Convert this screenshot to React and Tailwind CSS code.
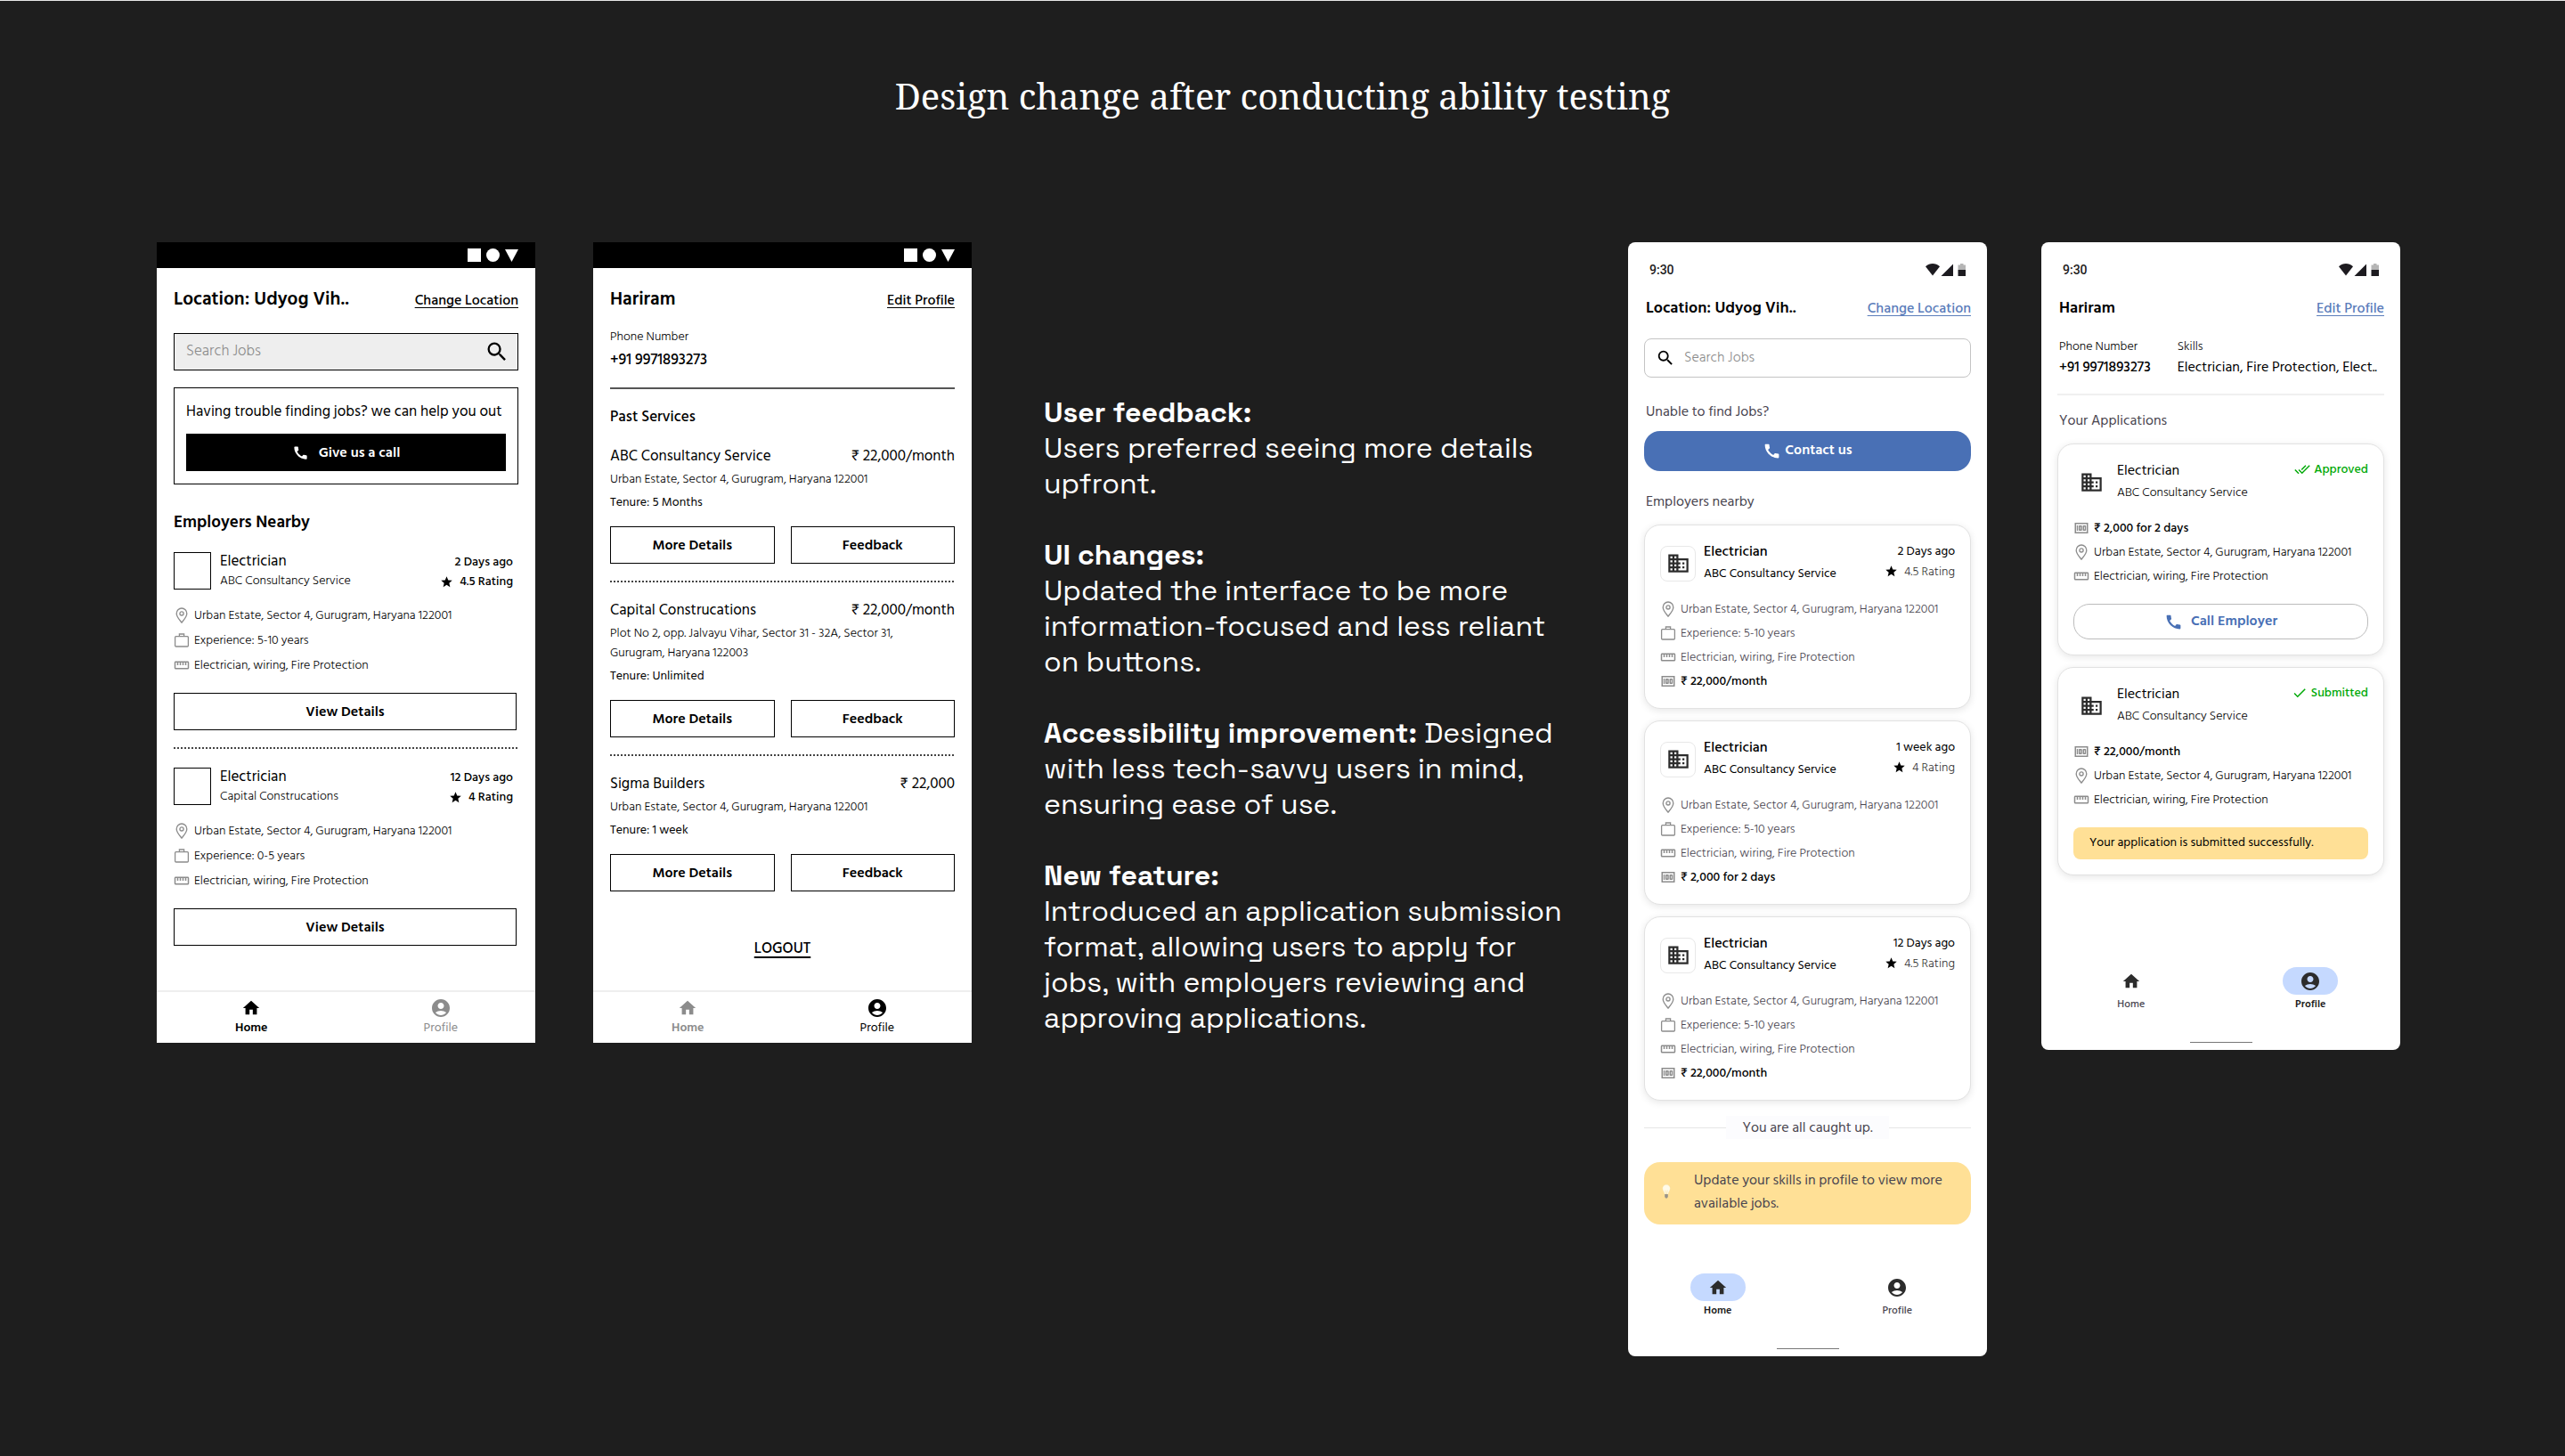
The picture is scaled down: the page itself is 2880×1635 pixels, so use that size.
import React from "react";
import {
  MdHome,
  MdAccountCircle,
  MdSearch,
  MdCall,
  MdStar,
  MdBusiness,
  MdStraighten,
  MdMoney,
  MdDone,
  MdDoneAll,
} from "react-icons/md";

const ADDRESS = "Urban Estate, Sector 4, Gurugram, Haryana 122001";
const SKILLS = "Electrician, wiring, Fire Protection";

function PinIcon() {
  return (
    <svg viewBox="0 0 18 18" className="size-[18px]" fill="none" stroke="currentColor" strokeWidth="1.3" aria-hidden="true">
      <path d="M9 17.2C6.6 14 3.2 10.4 3.2 6.9a5.8 5.9 0 0 1 11.6 0C14.8 10.4 11.4 14 9 17.2Z" />
      <circle cx="9" cy="6.9" r="2.1" />
    </svg>
  );
}

function BriefcaseIcon() {
  return (
    <svg viewBox="0 0 18 18" className="size-[18px]" fill="none" stroke="currentColor" strokeWidth="1.3" aria-hidden="true">
      <rect x="1.6" y="4.7" width="14.8" height="11.3" rx="1" />
      <path d="M6.4 4.5V2h5.2v2.5" />
    </svg>
  );
}

function BulbIcon() {
  return (
    <svg viewBox="0 0 10 16" className="h-4 w-[10px] shrink-0" aria-hidden="true">
      <path d="M5 .3A4.3 4.3 0 0 0 .7 4.6C.7 7 2.600 8.200 3 11h4c.4-2.800 2.300-4 2.300-6.400A4.300 4.300 0 0 0 5 .3Z" fill="#fffbe9" stroke="#f1dfa8" strokeWidth=".3" />
      <path d="M3.8 6.5 4.4 10.8h1.2l.6-4.3" fill="none" stroke="#f2d98c" strokeWidth=".5" />
      <path d="M3.2 11h3.600v3L5.800 15.500H4.200L3.200 14Z" fill="#98948a" />
    </svg>
  );
}

const META_ICONS = {
  place: <PinIcon />,
  experience: <BriefcaseIcon />,
  skills: <MdStraighten className="size-[18px]" />,
  pay: <MdMoney className="size-[18px]" />,
};

function Meta({ icon, className = "", children }) {
  return (
    <li className="flex items-center gap-[5px]">
      <span className="text-[#8c8c8c]">{META_ICONS[icon]}</span>
      <span className={className}>{children}</span>
    </li>
  );
}

/* ---------- First version: wireframes ---------- */

function WireShell({ title, action, active, children }) {
  return (
    <section className="flex flex-col bg-white text-black">
      <div className="flex h-[29px] items-center justify-end gap-1.5 bg-black pr-[19px]">
        <span className="size-[15px] bg-white" />
        <span className="size-[15px] rounded-full bg-white" />
        <svg viewBox="0 0 15 14" className="h-[14px] w-[15px]" aria-hidden="true">
          <path d="M0 0h15L7.5 14Z" fill="#fff" />
        </svg>
      </div>
      <div className="grow px-[19px] pt-[19px] pb-[35px]">
        <header className="flex items-baseline justify-between">
          <h2 className="text-[21px] leading-8 font-semibold">{title}</h2>
          <a href="#" className="text-[16px] leading-6 font-medium underline decoration-1 underline-offset-3">{action}</a>
        </header>
        {children}
      </div>
      <nav className="grid grid-cols-2 border-t-2 border-[#eeeeee] pt-1.5 pb-[7px]">
        <WireTab on={active === "home"} icon={<MdHome className="size-[22px]" />} className="font-semibold">Home</WireTab>
        <WireTab on={active === "profile"} icon={<MdAccountCircle className="size-6" />}>Profile</WireTab>
      </nav>
    </section>
  );
}

function WireTab({ on, icon, className = "", children }) {
  return (
    <button type="button" className={`flex flex-col items-center text-[14px] leading-5 ${on ? "text-black" : "text-[#8c8c8c]"} ${className}`}>
      <span className="flex h-6 items-center">{icon}</span>
      {children}
    </button>
  );
}

function WireButton({ children }) {
  return (
    <button type="button" className="h-[42px] w-full border border-black text-[16px] font-semibold">{children}</button>
  );
}

function Dashes({ className }) {
  return (
    <hr className={`mt-[19px] h-0.5 border-0 bg-[repeating-linear-gradient(90deg,#444444_0_2px,transparent_2px_4px)] ${className}`} />
  );
}

function WireJob({ company, age, rating, experience }) {
  return (
    <article className="pr-0.5">
      <div className="flex gap-[10px]">
        <div className="size-[42px] border border-black" />
        <div>
          <h4 className="text-[17px] leading-[21px]">{company[0]}</h4>
          <p className="text-[14px] leading-[22px] font-light">{company[1]}</p>
        </div>
        <div className="ml-auto flex flex-col items-end pr-1 text-[14px] leading-[22px] font-medium">
          <span>{age}</span>
          <span className="flex items-center gap-[7px]">
            <MdStar className="size-[15px]" />
            {rating} Rating
          </span>
        </div>
      </div>
      <ul className="mt-[13px] mb-[17px] text-[14px] leading-7 font-light">
        <Meta icon="place">{ADDRESS}</Meta>
        <Meta icon="experience">Experience: {experience}</Meta>
        <Meta icon="skills">{SKILLS}</Meta>
      </ul>
      <WireButton>View Details</WireButton>
    </article>
  );
}

function WireHome() {
  return (
    <WireShell title="Location: Udyog Vih.." action="Change Location" active="home">
      <label className="mt-[22px] flex h-[42px] items-center border border-black bg-[#eeeeee] pr-[9px] pl-[13px]">
        <input type="text" aria-label="Search Jobs" placeholder="Search Jobs" className="min-w-0 flex-1 bg-transparent text-[17px] font-light outline-none placeholder:text-[#8c8c8c]" />
        <MdSearch className="size-[28px]" />
      </label>
      <div className="mt-[19px] border border-black px-[13px] pt-[14px] pb-[14px]">
        <p className="text-[17px] leading-6 whitespace-nowrap">Having trouble finding jobs? we can help you out</p>
        <button type="button" className="mt-[13px] flex h-[42px] w-full items-center justify-center gap-[11px] bg-black text-[16px] font-semibold text-white">
          <MdCall className="size-[19px]" />
          Give us a call
        </button>
      </div>
      <h3 className="mt-[29px] mb-[19px] text-[19px] leading-7 font-semibold">Employers Nearby</h3>
      <WireJob company={["Electrician", "ABC Consultancy Service"]} age="2 Days ago" rating="4.5" experience="5-10 years" />
      <Dashes className="mb-[21px]" />
      <WireJob company={["Electrician", "Capital Construcations"]} age="12 Days ago" rating="4" experience="0-5 years" />
    </WireShell>
  );
}

function WireService({ name, pay, address, tenure }) {
  return (
    <article>
      <div className="flex justify-between text-[17px] leading-[26px]">
        <h4>{name}</h4>
        <span>{pay}</span>
      </div>
      <p className="py-0.5 pr-6 text-[14px] leading-[22px] font-light">{address}</p>
      <p className="text-[14px] leading-[26px]">Tenure: {tenure}</p>
      <div className="mt-[14px] grid grid-cols-2 gap-[18px]">
        <WireButton>More Details</WireButton>
        <WireButton>Feedback</WireButton>
      </div>
    </article>
  );
}

function WireProfile() {
  return (
    <WireShell title="Hariram" action="Edit Profile" active="profile">
      <dl className="mt-[14px]">
        <dt className="text-[14px] leading-6 font-light">Phone Number</dt>
        <dd className="text-[17px] leading-7 font-medium">+91 9971893273</dd>
      </dl>
      <hr className="mt-[17px] border-t-2 border-[#555555]" />
      <h3 className="my-[19px] text-[17px] leading-6 font-medium">Past Services</h3>
      <WireService name="ABC Consultancy Service" pay="₹ 22,000/month" address={ADDRESS} tenure="5 Months" />
      <Dashes className="mb-[18px]" />
      <WireService name="Capital Construcations" pay="₹ 22,000/month" address="Plot No 2, opp. Jalvayu Vihar, Sector 31 - 32A, Sector 31, Gurugram, Haryana 122003" tenure="Unlimited" />
      <Dashes className="mb-[18px]" />
      <WireService name="Sigma Builders" pay="₹ 22,000" address={ADDRESS} tenure="1 week" />
      <div className="mt-[52px] text-center">
        <a href="#" className="text-[17px] leading-6 font-medium underline decoration-2 underline-offset-4">LOGOUT</a>
      </div>
    </WireShell>
  );
}

/* ---------- Second version: final screens ---------- */

function StatusIcons() {
  return (
    <svg viewBox="0 0 46 16" className="h-4 w-[46px]" fill="#1d1b20" aria-hidden="true">
      <path d="M0 4.2C4.8 0 11.2 0 16 4.2L8 14.5Z" />
      <path d="M17.5 15 31 1.5V15Z" />
      <path d="M39 1h3.5v1.5H45V8h-8.500V2.500H39Z" fill="#b5b5b5" />
      <path d="M36.5 8H45v7h-8.500Z" />
    </svg>
  );
}

function AppShell({ title, action, active, children }) {
  return (
    <section className="flex flex-col rounded-lg bg-white px-[18px] pt-[21px] pb-2 text-black">
      <div className="flex h-5 items-center justify-between pr-[5px] pl-1.5">
        <span className="font-['Roboto',sans-serif] text-[14px] leading-5 font-medium text-[#1d1b20]">9:30</span>
        <StatusIcons />
      </div>
      <header className="mt-[19px] flex items-baseline justify-between pl-0.5">
        <h2 className="text-[18px] leading-7 font-semibold">{title}</h2>
        <a href="#" className="text-[16px] leading-6 font-medium text-[#5b7dbb] underline decoration-1 underline-offset-3">{action}</a>
      </header>
      {children}
      <nav className="-mx-[18px] grid grid-cols-2">
        <AppTab on={active === "home"} icon={<MdHome className="size-[22px]" />}>Home</AppTab>
        <AppTab on={active === "profile"} icon={<MdAccountCircle className="size-6" />}>Profile</AppTab>
      </nav>
      <div className="mx-auto mt-[32px] h-px w-[70px] bg-[#777777]" />
    </section>
  );
}

function AppTab({ on, icon, children }) {
  return (
    <button type="button" className={`flex flex-col items-center gap-px text-[12px] leading-5 ${on ? "font-semibold text-[#1d1b20]" : "font-medium text-[#49454f]"}`}>
      <span className={`flex h-[31px] w-[62px] items-center justify-center rounded-full text-[#2c2c2c] ${on ? "bg-[#c5d9ff]" : ""}`}>{icon}</span>
      {children}
    </button>
  );
}

function Card({ children }) {
  return (
    <article className="rounded-[18px] border border-[#e2e2e2] bg-white p-[17px] shadow-[0_2px_8px_rgba(0,0,0,0.1)]">{children}</article>
  );
}

function JobCard({ age, rating, pay }) {
  return (
    <Card>
      <div className="flex items-center gap-[9px]">
        <div className="flex size-10 items-center justify-center rounded-lg border border-[#e8e8e8] text-[#2c2c2c]">
          <MdBusiness className="size-[27px]" />
        </div>
        <div className="pb-0.5">
          <h4 className="text-[16px] leading-6 font-medium">Electrician</h4>
          <p className="mt-px text-[14px] leading-6">ABC Consultancy Service</p>
        </div>
        <div className="ml-auto flex flex-col items-end self-start text-[14px] leading-[23px]">
          <span>{age}</span>
          <span className="flex items-center gap-[7px] font-light text-[#333333]">
            <MdStar className="size-[15px] text-black" />
            {rating} Rating
          </span>
        </div>
      </div>
      <ul className="mt-3 text-[14px] leading-[27px] font-light text-[#49454f]">
        <Meta icon="place">{ADDRESS}</Meta>
        <Meta icon="experience">Experience: 5-10 years</Meta>
        <Meta icon="skills">{SKILLS}</Meta>
        <Meta icon="pay" className="font-medium text-black">{pay}</Meta>
      </ul>
    </Card>
  );
}

function AppHome() {
  return (
    <AppShell title="Location: Udyog Vih.." action="Change Location" active="home">
      <label className="mt-5 flex h-11 items-center gap-[10px] rounded-lg border border-[#c4c4c4] px-3">
        <MdSearch className="size-[22px]" />
        <input type="text" aria-label="Search Jobs" placeholder="Search Jobs" className="min-w-0 flex-1 bg-transparent pb-[3px] text-[16px] font-light outline-none placeholder:text-[#8c8c8c]" />
      </label>
      <h3 className="mt-[26px] mb-[10px] pl-0.5 text-[16px] leading-6 text-[#49454f]">Unable to find Jobs?</h3>
      <button type="button" className="flex h-[45px] items-center justify-center gap-1 rounded-[18px] bg-[#4970b5] text-[16px] font-semibold text-white">
        <MdCall className="size-[21px]" />
        <span className="pb-[3px]">Contact us</span>
      </button>
      <h3 className="mt-[22px] mb-[14px] pl-0.5 text-[16px] leading-6 text-[#49454f]">Employers nearby</h3>
      <div className="flex flex-col gap-[13px]">
        <JobCard age="2 Days ago" rating="4.5" pay="₹ 22,000/month" />
        <JobCard age="1 week ago" rating="4" pay="₹ 2,000 for 2 days" />
        <JobCard age="12 Days ago" rating="4.5" pay="₹ 22,000/month" />
      </div>
      <div className="mt-[17px] flex items-center">
        <span className="h-px flex-1 bg-[#e6e6e6]" />
        <p className="bg-[#fcfcfe] px-[18px] text-[16px] leading-[26px] text-[#49454f]">You are all caught up.</p>
        <span className="h-px flex-1 bg-[#e6e6e6]" />
      </div>
      <div className="mt-[26px] mb-[55px] flex items-center gap-[26px] rounded-[18px] bg-[#ffe096] pt-[7px] pr-5 pb-[11px] pl-5">
        <BulbIcon />
        <p className="text-[16px] leading-[26px] text-[#49454f]">Update your skills in profile to view more available jobs.</p>
      </div>
    </AppShell>
  );
}

function ApplicationCard({ status, icon, pay, children }) {
  return (
    <Card>
      <div className="flex items-center gap-[9px]">
        <div className="flex size-10 items-center justify-center text-[#2c2c2c]">
          <MdBusiness className="size-[27px]" />
        </div>
        <div className="pb-0.5">
          <h4 className="text-[16px] leading-6">Electrician</h4>
          <p className="mt-px text-[14px] leading-6 font-light">ABC Consultancy Service</p>
        </div>
        <span className="ml-auto flex items-center gap-1 self-start text-[14px] leading-[22px] font-medium text-[#00a907]">
          {icon}
          {status}
        </span>
      </div>
      <ul className="mt-3 mb-[18px] text-[14px] leading-[27px] font-light">
        <Meta icon="pay" className="font-medium">{pay}</Meta>
        <Meta icon="place">{ADDRESS}</Meta>
        <Meta icon="skills">{SKILLS}</Meta>
      </ul>
      {children}
    </Card>
  );
}

function AppProfile() {
  return (
    <AppShell title="Hariram" action="Edit Profile" active="profile">
      <dl className="mt-[18px] flex gap-[30px] pl-0.5">
        <div>
          <dt className="text-[14px] leading-[22px] font-light">Phone Number</dt>
          <dd className="text-[16px] leading-6 font-medium">+91 9971893273</dd>
        </div>
        <div>
          <dt className="text-[14px] leading-[22px] font-light">Skills</dt>
          <dd className="text-[16px] leading-6 whitespace-nowrap">Electrician, Fire Protection, Elect..</dd>
        </div>
      </dl>
      <hr className="mt-[18px] border-t-2 border-[#f0f0f0]" />
      <h3 className="mt-[16px] mb-[14px] pl-0.5 text-[16px] leading-6 text-[#49454f]">Your Applications</h3>
      <div className="mb-[103px] flex flex-col gap-[13px]">
        <ApplicationCard status="Approved" icon={<MdDoneAll className="size-[18px]" />} pay="₹ 2,000 for 2 days">
          <button type="button" className="flex h-10 w-full items-center justify-center gap-[9px] rounded-[18px] border border-[#bcbcbc] text-[16px] font-semibold text-[#4970b5]">
            <MdCall className="size-[21px]" />
            <span className="pb-[3px]">Call Employer</span>
          </button>
        </ApplicationCard>
        <ApplicationCard status="Submitted" icon={<MdDone className="size-[18px]" />} pay="₹ 22,000/month">
          <p className="rounded-lg bg-[#ffe096] px-[18px] pb-0.5 text-[14px] leading-[34px]">Your application is submitted successfully.</p>
        </ApplicationCard>
      </div>
    </AppShell>
  );
}

function Notes() {
  return (
    <section className="flex flex-col gap-10 pt-[171px] pr-[60px] pl-[81px] font-['Space_Grotesk','Inter',sans-serif] text-[32px] leading-10 text-white">
      <div>
        <h2 className="font-bold">User feedback:</h2>
        <p>Users preferred seeing more details upfront.</p>
      </div>
      <div>
        <h2 className="font-bold">UI changes:</h2>
        <p>Updated the interface to be more information-focused and less reliant on buttons.</p>
      </div>
      <p>
        <strong className="font-bold">Accessibility improvement:</strong> Designed with less tech-savvy users in mind, ensuring ease of use.
      </p>
      <div>
        <h2 className="font-bold">New feature:</h2>
        <p>Introduced an application submission format, allowing users to apply for jobs, with employers reviewing and approving applications.</p>
      </div>
    </section>
  );
}

export default function App() {
  return (
    <main className="min-h-screen border-t border-[#e8e8e8] bg-[#1e1e1e] pt-[79px] pb-20 font-['Hind_Siliguri','Roboto','Noto_Sans',sans-serif]">
      <h1 className="text-center font-['Noto_Serif',serif] text-[40px] leading-[56px] text-white">Design change after conducting ability testing</h1>
      <div className="mt-[136px] grid grid-cols-[915fr_737fr_867fr] items-start pr-[185px] pl-[176px]">
        <div className="grid grid-cols-2 gap-[65px]">
          <WireHome />
          <WireProfile />
        </div>
        <Notes />
        <div className="grid grid-cols-2 items-start gap-[61px]">
          <AppHome />
          <AppProfile />
        </div>
      </div>
    </main>
  );
}
